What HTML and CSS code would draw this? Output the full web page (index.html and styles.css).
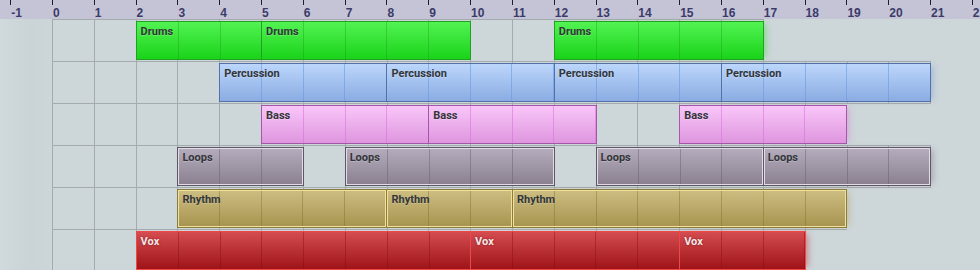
FILE: index.html
```html
<!DOCTYPE html>
<html>
<head>
<meta charset="utf-8">
<title>Arranger</title>
<link rel="stylesheet" href="styles.css">
</head>
<body>
<div class="arranger">
  <div class="ruler">
    <span class="mark">-1</span><span class="mark">0</span><span class="mark">1</span><span class="mark">2</span><span class="mark">3</span><span class="mark">4</span><span class="mark">5</span><span class="mark">6</span><span class="mark">7</span><span class="mark">8</span><span class="mark">9</span><span class="mark">10</span><span class="mark">11</span><span class="mark">12</span><span class="mark">13</span><span class="mark">14</span><span class="mark">15</span><span class="mark">16</span><span class="mark">17</span><span class="mark">18</span><span class="mark">19</span><span class="mark">20</span><span class="mark">21</span><span class="mark">22</span>
  </div>
  <div class="tracks">
    <div class="track drums">
      <div class="lane" style="grid-column: 3 / 20"></div>
      <div class="clip" style="grid-column: 5 / 8">Drums</div>
      <div class="clip" style="grid-column: 8 / 13">Drums</div>
      <div class="clip end" style="grid-column: 15 / 20">Drums</div>
    </div>
    <div class="track perc">
      <div class="lane" style="grid-column: 3 / 24"></div>
      <div class="clip" style="grid-column: 7 / 11">Percussion</div>
      <div class="clip" style="grid-column: 11 / 15">Percussion</div>
      <div class="clip" style="grid-column: 15 / 19">Percussion</div>
      <div class="clip end" style="grid-column: 19 / 24">Percussion</div>
    </div>
    <div class="track bass">
      <div class="lane" style="grid-column: 3 / 22"></div>
      <div class="clip" style="grid-column: 8 / 12">Bass</div>
      <div class="clip" style="grid-column: 12 / 16">Bass</div>
      <div class="clip end" style="grid-column: 18 / 22">Bass</div>
    </div>
    <div class="track loops">
      <div class="lane" style="grid-column: 3 / 24"></div>
      <div class="clip" style="grid-column: 6 / 9">Loops</div>
      <div class="clip" style="grid-column: 10 / 15">Loops</div>
      <div class="clip" style="grid-column: 16 / 20">Loops</div>
      <div class="clip end" style="grid-column: 20 / 24">Loops</div>
    </div>
    <div class="track rhythm">
      <div class="lane" style="grid-column: 3 / 22"></div>
      <div class="clip" style="grid-column: 6 / 11">Rhythm</div>
      <div class="clip" style="grid-column: 11 / 14">Rhythm</div>
      <div class="clip end" style="grid-column: 14 / 22">Rhythm</div>
    </div>
    <div class="track vox">
      <div class="lane" style="grid-column: 3 / 21"></div>
      <div class="clip" style="grid-column: 5 / 13">Vox</div>
      <div class="clip" style="grid-column: 13 / 18">Vox</div>
      <div class="clip end" style="grid-column: 18 / 21">Vox</div>
    </div>
  </div>
</div>
</body>
</html>
```

FILE: styles.css
```css
:root {
  --beat: 41.82px;
  --grid-line: #a4abae;
}

html, body {
  margin: 0;
  padding: 0;
}

body {
  width: 980px;
  height: 270px;
  overflow: hidden;
  background: #cdd6d9;
}

.arranger {
  width: 1040px;
}

/* ---------- ruler ---------- */
.ruler {
  display: flex;
  height: 19px;
  padding-left: 10.18px;
  background: #c5c4d7;
  font-family: "Liberation Sans", Arial, sans-serif;
  font-weight: 700;
  font-size: 12px;
  line-height: 12px;
  color: #3b3b69;
}

.mark {
  flex: 0 0 var(--beat);
  box-sizing: border-box;
  padding: 7px 0 0 1px;
  background: linear-gradient(#1e1e2c, #1e1e2c) no-repeat 0 0 / 1px 5px;
}

/* ---------- tracks ---------- */
.tracks {
  background:
    linear-gradient(to right, #d0d9dc 0, #cad3d6 30px, #ccd5d8 50px, transparent 52px),
    #cdd6d9;
}

.track {
  display: grid;
  grid-template-columns: 10.18px repeat(24, var(--beat));
  grid-template-rows: 43px;
  margin-top: -1px;
}

.track:first-child {
  margin-top: 0;
}

.lane {
  grid-row: 1;
  margin-right: -1px;
  box-sizing: border-box;
  border-top: 1px solid var(--grid-line);
  border-bottom: 1px solid var(--grid-line);
  background: repeating-linear-gradient(90deg, var(--grid-line) 0 1px, transparent 1px var(--beat));
}

.clip {
  grid-row: 1;
  margin: 2px -1px 2px 0;
  box-sizing: border-box;
  border: 1px solid;
  padding: 3px 4px 0;
  font-family: Roboto, "Liberation Sans", Arial, sans-serif;
  font-weight: 700;
  font-size: 11px;
  line-height: 13px;
  color: #33363a;
  text-shadow: 0 1px 0 rgba(255, 255, 255, 0.22);
  white-space: nowrap;
  overflow: hidden;
  position: relative;
}

/* per-track colours */
.drums .clip {
  border-color: #22a022;
  background:
    repeating-linear-gradient(90deg, transparent 0 40.82px, rgba(20, 150, 20, 0.35) 40.82px var(--beat)),
    linear-gradient(#52f352, #1ad31a);
}
.drums .end { box-shadow: 5px 0 6px -3px rgba(40, 220, 40, 0.45); }

.perc .clip {
  border-color: #5470a6;
  background:
    repeating-linear-gradient(90deg, transparent 0 40.82px, rgba(100, 150, 230, 0.55) 40.82px var(--beat)),
    linear-gradient(#bcd6fb, #8aace2);
}
.perc .end { box-shadow: 5px 0 6px -3px rgba(110, 150, 220, 0.45); }

.bass .clip {
  border-color: #a656a6;
  background:
    repeating-linear-gradient(90deg, transparent 0 40.82px, rgba(220, 100, 225, 0.5) 40.82px var(--beat)),
    linear-gradient(#f9c6f9, #de96de);
}
.bass .end { box-shadow: 5px 0 6px -3px rgba(220, 120, 220, 0.45); }

.loops .clip {
  border-color: #5d5766;
  box-shadow: inset 0 0 0 1px #e2dbe6;
  background:
    repeating-linear-gradient(90deg, transparent 0 40.82px, rgba(100, 92, 110, 0.45) 40.82px var(--beat)),
    linear-gradient(#b5adbd, #897f8f);
}
.loops .end { box-shadow: inset 0 0 0 1px #e2dbe6, 5px 0 6px -3px rgba(120, 110, 130, 0.45); }

.rhythm .clip {
  border-color: #8a7b3e;
  box-shadow: inset 0 0 0 1px #f0e09a;
  background:
    repeating-linear-gradient(90deg, transparent 0 40.82px, rgba(130, 112, 50, 0.45) 40.82px var(--beat)),
    linear-gradient(#cdbe82, #a6934f);
}
.rhythm .end { box-shadow: inset 0 0 0 1px #f0e09a, 5px 0 6px -3px rgba(180, 160, 80, 0.45); }

.vox .clip {
  border-color: #ef4747;
  color: #f6e8e8;
  text-shadow: 0 0 2px rgba(90, 0, 0, 0.6);
  background:
    repeating-linear-gradient(90deg, transparent 0 40.82px, rgba(130, 10, 12, 0.4) 40.82px var(--beat)),
    linear-gradient(#d44b50, #9e1418);
}
.vox .end { box-shadow: 5px 0 6px -3px rgba(200, 40, 40, 0.45); }
```
